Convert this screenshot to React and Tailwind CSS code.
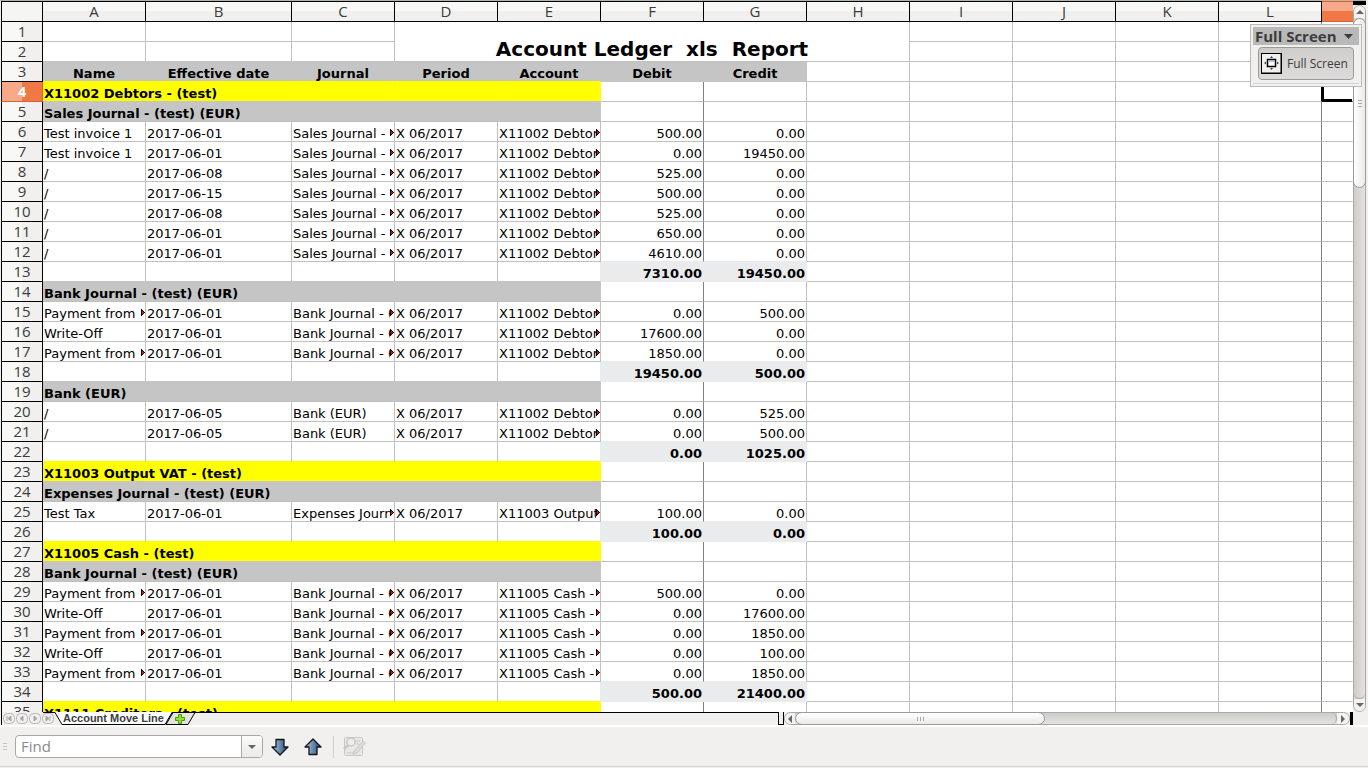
import React from "react";

const COLUMNS = ["A", "B", "C", "D", "E", "F", "G", "H", "I", "J", "K", "L", ""];

// A trailing ">" marks a value that continues past its cell.
const LEDGER = [
  ["blank"],
  ["blank"],
  ["head", "Name", "Effective date", "Journal", "Period", "Account", "Debit", "Credit"],
  ["account", "X11002 Debtors - (test)"],
  ["journal", "Sales Journal - (test) (EUR)"],
  ["line", "Test invoice 1", "2017-06-01", "Sales Journal ->", "X 06/2017", "X11002 Debtor>", "500.00", "0.00"],
  ["line", "Test invoice 1", "2017-06-01", "Sales Journal ->", "X 06/2017", "X11002 Debtor>", "0.00", "19450.00"],
  ["line", "/", "2017-06-08", "Sales Journal ->", "X 06/2017", "X11002 Debtor>", "525.00", "0.00"],
  ["line", "/", "2017-06-15", "Sales Journal ->", "X 06/2017", "X11002 Debtor>", "500.00", "0.00"],
  ["line", "/", "2017-06-08", "Sales Journal ->", "X 06/2017", "X11002 Debtor>", "525.00", "0.00"],
  ["line", "/", "2017-06-01", "Sales Journal ->", "X 06/2017", "X11002 Debtor>", "650.00", "0.00"],
  ["line", "/", "2017-06-01", "Sales Journal ->", "X 06/2017", "X11002 Debtor>", "4610.00", "0.00"],
  ["total", "7310.00", "19450.00"],
  ["journal", "Bank Journal - (test) (EUR)"],
  ["line", "Payment from>", "2017-06-01", "Bank Journal - (>", "X 06/2017", "X11002 Debtor>", "0.00", "500.00"],
  ["line", "Write-Off", "2017-06-01", "Bank Journal - (>", "X 06/2017", "X11002 Debtor>", "17600.00", "0.00"],
  ["line", "Payment from>", "2017-06-01", "Bank Journal - (>", "X 06/2017", "X11002 Debtor>", "1850.00", "0.00"],
  ["total", "19450.00", "500.00"],
  ["journal", "Bank (EUR)"],
  ["line", "/", "2017-06-05", "Bank (EUR)", "X 06/2017", "X11002 Debtor>", "0.00", "525.00"],
  ["line", "/", "2017-06-05", "Bank (EUR)", "X 06/2017", "X11002 Debtor>", "0.00", "500.00"],
  ["total", "0.00", "1025.00"],
  ["account", "X11003 Output VAT - (test)"],
  ["journal", "Expenses Journal - (test) (EUR)"],
  ["line", "Test Tax", "2017-06-01", "Expenses Journ>", "X 06/2017", "X11003 Output>", "100.00", "0.00"],
  ["total", "100.00", "0.00"],
  ["account", "X11005 Cash - (test)"],
  ["journal", "Bank Journal - (test) (EUR)"],
  ["line", "Payment from>", "2017-06-01", "Bank Journal - (>", "X 06/2017", "X11005 Cash ->", "500.00", "0.00"],
  ["line", "Write-Off", "2017-06-01", "Bank Journal - (>", "X 06/2017", "X11005 Cash ->", "0.00", "17600.00"],
  ["line", "Payment from>", "2017-06-01", "Bank Journal - (>", "X 06/2017", "X11005 Cash ->", "0.00", "1850.00"],
  ["line", "Write-Off", "2017-06-01", "Bank Journal - (>", "X 06/2017", "X11005 Cash ->", "0.00", "100.00"],
  ["line", "Payment from>", "2017-06-01", "Bank Journal - (>", "X 06/2017", "X11005 Cash ->", "0.00", "1850.00"],
  ["total", "500.00", "21400.00"],
  ["account", "X1111 Creditors - (test)"],
];

const ACTIVE_ROW = 4;

const FILL = { head: "bg-[#c5c5c5]", account: "bg-[#ffff00]", journal: "bg-[#c5c5c5]", total: "bg-[#e9ebed]" };
const EDGE_BOTTOM = { head: "border-b-[#c5c5c5]", account: "border-b-[#ffff00]", journal: "border-b-[#c5c5c5]", total: "border-b-[#e9ebed]" };
const EDGE_RIGHT = { head: "border-r-[#c5c5c5]", account: "border-r-[#ffff00]", journal: "border-r-[#c5c5c5]", total: "border-r-[#e9ebed]" };

function isFilled(kind, col) {
  if (kind === "head") return col < 7;
  if (kind === "account" || kind === "journal") return col < 5;
  if (kind === "total") return col === 5 || col === 6;
  return false;
}

function bottomEdge(kind, nextKind, col, active) {
  if (active && col === 12) return "border-b-black";
  if (isFilled(nextKind, col)) return EDGE_BOTTOM[nextKind];
  if (kind !== "journal" && isFilled(kind, col)) return EDGE_BOTTOM[kind];
  return "border-b-[#c0c0c0]";
}

function rightEdge(kind, col, active) {
  if (active && col === 11) return "border-r-black";
  if (isFilled(kind, col) || (kind === "total" && col === 4)) return EDGE_RIGHT[kind];
  if (col === 5 || col === 11) return "border-r-[#808080]";
  if (col === 12) return "border-r-transparent";
  return "border-r-[#c0c0c0]";
}

function Cell({ kind, nextKind, col, active, span = 1, children }) {
  return (
    <td
      colSpan={span}
      className={`h-5 overflow-hidden border-r border-b p-0 whitespace-nowrap ${isFilled(kind, col) ? FILL[kind] : "bg-white"} ${bottomEdge(kind, nextKind, col, active)} ${rightEdge(kind, col, active)} ${active && col === 12 ? "shadow-[inset_2px_-2px_0_#000]" : ""}`}
    >
      {children}
    </td>
  );
}

function OverflowMark() {
  return (
    <svg className="absolute top-[7px] right-0 h-[7px] w-1" viewBox="0 0 4 7" aria-hidden="true" shapeRendering="crispEdges">
      <path d="M0 0h1v1h1v1h1v1h1v1h-1v1h-1v1h-1v1h-1z" fill="#000" />
      <path d="M1 2h1v1h1v1h-1v1h-1z" fill="#ff0000" />
    </svg>
  );
}

function Value({ text, col }) {
  if (col >= 5) return <div className="pt-[5px] pr-px text-right leading-[14px]">{text}</div>;
  if (!text.endsWith(">")) return <div className="pt-[5px] pl-px leading-[14px]">{text}</div>;
  return (
    <div className="relative pt-[5px] pr-1 pl-px leading-[14px]">
      <div className="overflow-hidden">{text.slice(0, -1)}</div>
      <OverflowMark />
    </div>
  );
}

function LedgerRow({ number, row, nextKind }) {
  const [kind, ...values] = row;
  const active = number === ACTIVE_ROW;
  const cells = [];
  for (let col = 0; col < COLUMNS.length; col++) {
    const shared = { kind, nextKind, col, active };
    if (kind === "blank" && col === 3) {
      if (number === 1) {
        cells.push(
          <td key={col} colSpan={5} rowSpan={2} className="border-r border-b border-[#c0c0c0] bg-white p-0 pt-[15px] text-center align-top text-xl leading-6 font-bold whitespace-pre">
            {"Account Ledger  xls  Report"}
          </td>
        );
      }
      col = 7;
    } else if ((kind === "account" || kind === "journal") && col === 0) {
      cells.push(
        <Cell key={col} {...shared} span={5}>
          <div className="pt-[5px] pl-px leading-[14px] font-bold">{values[0]}</div>
        </Cell>
      );
      col = 4;
    } else if (kind === "total" && (col === 5 || col === 6)) {
      cells.push(
        <Cell key={col} {...shared}>
          <div className="pt-[5px] pr-px text-right leading-[14px] font-bold">{values[col - 5]}</div>
        </Cell>
      );
    } else if (kind === "head" && col < 7) {
      cells.push(
        <Cell key={col} {...shared}>
          <div className="pt-[5px] text-center leading-[14px] font-bold">{values[col]}</div>
        </Cell>
      );
    } else if (kind === "line" && col < 7) {
      cells.push(
        <Cell key={col} {...shared}>
          <Value text={values[col]} col={col} />
        </Cell>
      );
    } else {
      cells.push(<Cell key={col} {...shared} />);
    }
  }
  return (
    <tr>
      <th
        scope="row"
        className={`h-5 border-r border-b border-l p-0 text-center font-['Open_Sans',sans-serif] text-[15px] leading-[19px] ${
          active
            ? "border-r-[#d9622f] border-b-[#d9622f] border-l-black bg-[linear-gradient(90deg,#f7a98a_50%,#f07746_50%)] font-bold text-white"
            : "border-black bg-[linear-gradient(90deg,#f8f8f6_50%,#f1f0ee_50%)] font-normal text-[#3c3c3c]"
        }`}
      >
        {number}
      </th>
      {cells}
    </tr>
  );
}

function Sheet() {
  return (
    <div className="min-w-0 flex-1 overflow-hidden border-t border-[#b5b3ae] pl-px">
      <table className="w-full table-fixed border-separate border-spacing-0 font-['DejaVu_Sans',sans-serif] text-[13px] text-black">
        <colgroup>
          <col className="w-[42px]" />
          {COLUMNS.map((name, i) => (
            <col key={i} className={i === 1 ? "w-[146px]" : i === 12 ? "" : "w-[103px]"} />
          ))}
        </colgroup>
        <thead>
          <tr>
            <td className="h-[21px] border border-black bg-[#f5f5f3] p-0" />
            {COLUMNS.map((name, i) => (
              <th
                key={i}
                scope="col"
                className={`h-[21px] border-y p-0 text-center font-['Open_Sans',sans-serif] text-[15px] leading-[19px] font-normal text-[#3c3c3c] ${
                  i === 12
                    ? "border-y-[#d9622f] bg-[linear-gradient(#f7a98a_50%,#f07746_50%)]"
                    : "border-r border-black bg-[linear-gradient(#f8f8f6_50%,#f1f0ee_50%)]"
                }`}
              >
                {name}
              </th>
            ))}
          </tr>
        </thead>
        <tbody>
          {LEDGER.map((row, i) => (
            <LedgerRow key={i} number={i + 1} row={row} nextKind={LEDGER[i + 1]?.[0]} />
          ))}
        </tbody>
      </table>
    </div>
  );
}

function Arrow({ dir }) {
  const d = { up: "M0 4L4 0L8 4z", down: "M0 0L4 4L8 0z", left: "M4 0L0 4L4 8z", right: "M0 0L4 4L0 8z" }[dir];
  const tall = dir === "left" || dir === "right";
  return (
    <svg className={tall ? "h-2 w-1" : "h-1 w-2"} viewBox={tall ? "0 0 4 8" : "0 0 8 4"} aria-hidden="true">
      <path d={d} fill="#666" />
    </svg>
  );
}

function VerticalScroll() {
  return (
    <div className="flex w-[13px] shrink-0 flex-col border-t border-[#b5b3ae]">
      <div className="h-1 bg-black" />
      <div className="flex min-h-0 flex-1 flex-col rounded-full border border-[#aaa8a3] bg-[linear-gradient(90deg,#cfcdca,#e4e2e0)]">
        <button aria-label="Scroll up" className="flex h-3 shrink-0 items-center justify-center rounded-t-full bg-[#f4f3f2]">
          <Arrow dir="up" />
        </button>
        <div className="-mx-px flex h-[170px] shrink-0 flex-col items-center justify-center gap-[2px] rounded-full border border-[#9c9a96] bg-[linear-gradient(90deg,#fff,#ebeae8)]">
          <span className="h-px w-1 bg-[#aaa]" />
          <span className="h-px w-1 bg-[#aaa]" />
          <span className="h-px w-1 bg-[#aaa]" />
        </div>
        <div className="flex-1 rounded-b-full border-b border-[#aaa8a3]" />
        <button aria-label="Scroll down" className="flex h-3 shrink-0 items-center justify-center rounded-b-full bg-[#f4f3f2]">
          <Arrow dir="down" />
        </button>
      </div>
    </div>
  );
}

const NAV = [
  ["First sheet", "M4 4v5M8 4v5L5 6.500z"],
  ["Previous sheet", "M7 4v5L4 6.500z"],
  ["Next sheet", "M5 4v5L8 6.500z"],
  ["Last sheet", "M4 4v5L7 6.500zM8 4v5"],
];

function TabBar() {
  return (
    <div className="flex h-[13px] shrink-0 pl-px">
      <div className="flex w-[778px] shrink-0 border-r border-l border-black">
        <div className="flex w-[53px] gap-px pl-px">
          {NAV.map(([label, d]) => (
            <button key={label} aria-label={label} className="h-3 w-3">
              <svg viewBox="0 0 12 12" className="h-3 w-3">
                <rect x=".5" y="1.500" width="11" height="10" rx="4" fill="#f1f0ee" stroke="#b9b7b3" />
                <path d={d} fill="#a9a7a3" stroke="#a9a7a3" />
              </svg>
            </button>
          ))}
        </div>
        <div className="relative flex flex-1 border-t border-black">
          <svg className="absolute -top-px left-0 h-[13px] w-[141px] overflow-visible" viewBox="0 0 141 13" aria-hidden="true">
            <path d="M-12 0.500H1" stroke="#000" />
            <path d="M111 12.500L118 0.500H140L133 12.500z" fill="#e4e3e1" stroke="#000" />
            <path d="M0 0L7 12H110L117 0z" fill="#fff" />
            <path d="M0 0.500L7 12.500H110L117 0.500" fill="none" stroke="#000" />
            <path d="M123.500 2.500h3v3h3v3h-3v3h-3v-3h-3v-3h3z" fill="#8ae234" stroke="#4e9a06" />
          </svg>
          <button className="relative ml-2 h-[11px] text-left font-['Liberation_Sans',sans-serif] text-[11px] leading-[11px] font-bold whitespace-nowrap text-[#3c3c3c]">
            Account Move Line
          </button>
        </div>
      </div>
      <div className="w-[5px] shrink-0 border-r border-b border-black bg-[#f1f0ee]" />
      <div className="flex min-w-0 flex-1 rounded-full border border-[#aaa8a3] bg-[linear-gradient(#cfcdca,#e4e2e0)]">
        <button aria-label="Scroll left" className="flex w-[10px] items-center justify-center rounded-l-full bg-[#f4f3f2]">
          <Arrow dir="left" />
        </button>
        <div className="-my-px flex w-[250px] items-center justify-center gap-[2px] rounded-full border border-[#9c9a96] bg-[linear-gradient(#fff,#ebeae8)]">
          <span className="h-1 w-px bg-[#aaa]" />
          <span className="h-1 w-px bg-[#aaa]" />
          <span className="h-1 w-px bg-[#aaa]" />
        </div>
        <div className="flex-1 rounded-r-full border-r border-[#aaa8a3]" />
        <button aria-label="Scroll right" className="flex w-3 items-center justify-center rounded-r-full bg-[#f4f3f2]">
          <Arrow dir="right" />
        </button>
      </div>
      <div className="mr-[15px] w-[3px] shrink-0 bg-black" />
    </div>
  );
}

function FindArrow({ up }) {
  return (
    <svg className="h-[18px] w-[18px]" viewBox="0 0 18 18" aria-hidden="true">
      <defs>
        <linearGradient id={up ? "fu" : "fd"} x1="0" x2="1" y1="0" y2="0">
          <stop offset="0.100" stopColor="#a3bdd6" />
          <stop offset="0.900" stopColor="#2c5480" />
        </linearGradient>
      </defs>
      <path
        d={up ? "M9 1L17 9H13V16.500H5V9H1z" : "M9 17L17 9H13V1.500H5V9H1z"}
        fill={up ? "url(#fu)" : "url(#fd)"}
        stroke="#10151c"
        strokeWidth="1.300"
        strokeLinejoin="round"
      />
    </svg>
  );
}

function FindBar() {
  return (
    <div className="shrink-0 border-t-2 border-white pb-px">
      <div className="flex items-center border-b border-[#d5d3d0] py-2 pl-[3px]">
        <div className="flex w-3 flex-col gap-[2px]">
          <span className="h-px w-1 bg-[#c8c6c3]" />
          <span className="h-px w-1 bg-[#c8c6c3]" />
          <span className="h-px w-1 bg-[#c8c6c3]" />
        </div>
        <div className="flex h-[23px] w-[248px] overflow-hidden rounded border border-[#aaa8a3] bg-white">
          <input
            aria-label="Find"
            placeholder="Find"
            className="w-[225px] pl-[5px] font-['Open_Sans',sans-serif] text-[15px] text-[#3c3c3c] outline-none placeholder:text-[#8c8c8c]"
          />
          <button aria-label="Search history" className="flex flex-1 items-center justify-center border-l border-[#aaa8a3] bg-[linear-gradient(#fbfbfa,#ebeae8)]">
            <Arrow dir="down" />
          </button>
        </div>
        <button aria-label="Find next" className="ml-2"><FindArrow /></button>
        <button aria-label="Find previous" className="ml-[15px]"><FindArrow up /></button>
        <div className="ml-[11px] h-[22px] w-px bg-[#d0cecb]" />
        <button aria-label="Find and replace" className="ml-[9px]">
          <svg className="h-[22px] w-[24px]" viewBox="0 0 24 22" fill="none" stroke="#c9c7c5">
            <rect x="1.500" y="1.500" width="18" height="18" rx="1" fill="#e9e8e6" />
            <path d="M12 5h5M13 8h3M4 17h8" />
            <circle cx="8" cy="6" r="4" fill="#efeeec" strokeWidth="1.500" />
            <path d="M5 9.500L1 13" strokeWidth="2.500" />
            <path d="M11 15L20 5L22.500 7L14 17L10 18z" fill="#dddbd9" />
          </svg>
        </button>
      </div>
    </div>
  );
}

function FullScreenPanel() {
  return (
    <div className="absolute top-6 right-[6px] w-28 border border-[#bcbab6] bg-[#f1f0ee] px-[2px] pt-[2px] pb-[2px] font-['Open_Sans',sans-serif] text-[#3c3c3c]">
      <button className="flex h-[18px] w-full items-center justify-between bg-[#b9b9b9] pr-[6px] pl-[2px] text-[15px] leading-[18px] font-bold">
        <span>Full Screen</span>
        <svg className="h-[5px] w-[9px]" viewBox="0 0 9 5" aria-hidden="true"><path d="M0 0h9L4.500 5z" fill="#3c3c3c" /></svg>
      </button>
      <div className="border-b border-[#d5d3d0] pt-[2px] pr-[5px] pb-[3px] pl-[5px]">
        <button className="flex h-[33px] w-full items-center gap-[5px] rounded border border-[#9c9a96] bg-[linear-gradient(#cfcdcb,#dddcda)] pl-[2px] text-xs whitespace-nowrap">
          <svg className="h-[21px] w-[21px] shrink-0" viewBox="0 0 21 21" aria-hidden="true">
            <rect x=".5" y=".5" width="20" height="20" fill="#f1f0ee" stroke="#000" />
            <path d="M20.500 1V20.500H1" fill="none" stroke="#000" strokeWidth="2" />
            <rect x="6.500" y="6.500" width="8" height="7" fill="#fff" stroke="#000" strokeWidth="1.500" />
            <path d="M7 8h7" stroke="#9db0cc" strokeWidth="1.500" />
            <path d="M10.500 3l1.500 2h-3zM10.500 17l1.500-2h-3zM3 10l2-1.500v3zM18 10l-2-1.500v3z" fill="#444" />
          </svg>
          Full Screen
        </button>
      </div>
    </div>
  );
}

export default function App() {
  return (
    <div className="relative flex h-screen flex-col overflow-hidden bg-[#f1f0ee]">
      <main className="flex min-h-0 flex-1 pr-[2px]">
        <Sheet />
        <VerticalScroll />
      </main>
      <TabBar />
      <FindBar />
      <FullScreenPanel />
    </div>
  );
}
